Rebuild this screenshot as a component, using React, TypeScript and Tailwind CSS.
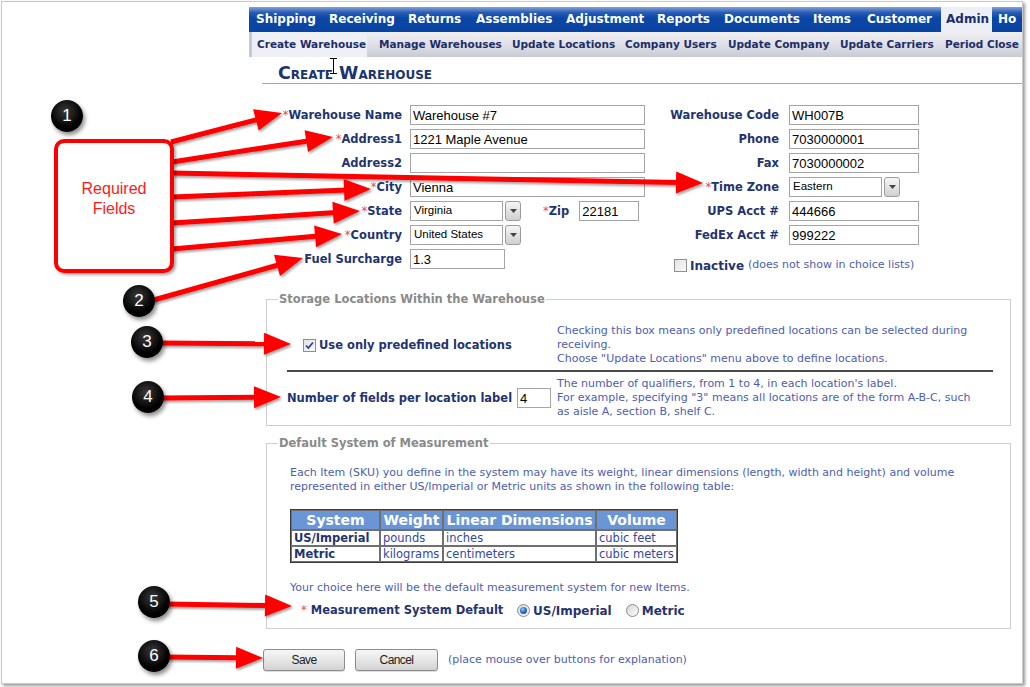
import React from "react";

const TOP_TABS: { label: string; cls: string; active?: boolean }[] = [
  { label: "Shipping", cls: "w-[72px] pl-[7px]" },
  { label: "Receiving", cls: "w-[79px] pl-[8px]" },
  { label: "Returns", cls: "w-[68px] pl-[8px]" },
  { label: "Assemblies", cls: "w-[90px] pl-[8px]" },
  { label: "Adjustment", cls: "w-[91px] pl-[8px]" },
  { label: "Reports", cls: "w-[67px] pl-[8px]" },
  { label: "Documents", cls: "w-[89px] pl-[8px]" },
  { label: "Items", cls: "w-[54px] pl-[8px]" },
  { label: "Customer", cls: "w-[82px] pl-[8px]" },
  { label: "Admin", cls: "w-[51px] pl-[5px]", active: true },
  { label: "Ho", cls: "w-[29px] pl-[6px]" },
];

const SUB_TABS: { label: string; cls: string }[] = [
  { label: "Manage Warehouses", cls: "w-[133px]" },
  { label: "Update Locations", cls: "w-[113px]" },
  { label: "Company Users", cls: "w-[103px]" },
  { label: "Update Company", cls: "w-[112px]" },
  { label: "Update Carriers", cls: "w-[105px]" },
  { label: "Period Close", cls: "w-[76px]" },
];

// start x, start y, tip x, tip y  (image coordinates)
const ARROWS: [number, number, number, number][] = [
  [171, 142, 282, 113],
  [172, 162, 333, 137],
  [172, 173, 703, 183],
  [172, 197, 371, 189],
  [172, 223, 360, 211],
  [172, 249, 342, 234],
  [150, 301, 303, 258],
  [160, 343, 291, 344],
  [160, 398, 281, 397],
  [166, 604, 292, 606],
  [166, 657, 263, 658],
];

const BADGES: { n: string; cls: string }[] = [
  { n: "1", cls: "left-[51px] top-[100px]" },
  { n: "2", cls: "left-[123px] top-[285px]" },
  { n: "3", cls: "left-[131px] top-[326px]" },
  { n: "4", cls: "left-[132px] top-[381px]" },
  { n: "5", cls: "left-[138px] top-[586px]" },
  { n: "6", cls: "left-[138px] top-[640px]" },
];

const label = "font-bold text-[11.5px] text-[#1f3470] whitespace-nowrap";
const note = "text-[11px] leading-[14px] text-[#4d5db3] whitespace-nowrap";
const arial = "font-['Liberation_Sans',Arial,sans-serif]";

export default function App() {
  return (
    <div className="relative h-[687px] w-[1030px] overflow-hidden bg-white font-['DejaVu_Sans',Verdana,sans-serif]">
      <div className="ml-px mt-px flex h-[683px] w-[1022px] border border-[#c8c8c8] bg-white shadow-[2px_2px_3px_rgba(0,0,0,0.4)]">
        <div className="w-[247px] shrink-0" />
        <div className="flex min-w-0 flex-1 flex-col overflow-hidden">
          {/* Top menu */}
          <div className="mt-[5px] flex h-[25px] shrink-0 bg-[linear-gradient(to_bottom,#86a3dc_0%,#2a5db5_22%,#0a46a6_45%,#0a44a2_100%)]">
            {TOP_TABS.map((t) => (
              <div
                key={t.label}
                className={`${t.cls} shrink-0 whitespace-nowrap text-[12px] font-bold leading-[25px] ${
                  t.active ? "bg-[#eceff6] text-[#1d2d6b]" : "text-white"
                }`}
              >
                {t.label}
              </div>
            ))}
          </div>

          {/* Sub menu */}
          <div className="flex h-[25px] shrink-0 bg-[linear-gradient(to_bottom,#efeff3_0%,#dedfe6_55%,#c8cad3_100%)] text-[10.5px] font-bold leading-[25px] text-[#1c2d69]">
            <div className="w-[3px] shrink-0 bg-[#c5c7d1]" />
            <div className="w-[115px] shrink-0 whitespace-nowrap bg-[#eef0f6] pl-[5px]">Create Warehouse</div>
            <div className="flex pl-[12px]">
              {SUB_TABS.map((t) => (
                <div key={t.label} className={`${t.cls} shrink-0 whitespace-nowrap`}>
                  {t.label}
                </div>
              ))}
            </div>
          </div>

          {/* Title */}
          <div className="ml-[13px] h-[27px] shrink-0 border-b border-[#a8a8a8] pl-[16px] pt-[7px]">
            <h1 className="text-[17.5px] font-bold leading-[18px] text-[#1b3470] [font-variant:small-caps]">
              Create Warehouse
            </h1>
          </div>

          {/* Main form */}
          <div className="mt-[19px] flex shrink-0">
            <div className="w-[396px] shrink-0">
              <LeftRow text="Warehouse Name" req>
                <TextBox w="w-[235px]" value="Warehouse #7" />
              </LeftRow>
              <LeftRow text="Address1" req>
                <TextBox w="w-[235px]" value="1221 Maple Avenue" />
              </LeftRow>
              <LeftRow text="Address2">
                <TextBox w="w-[235px]" value="" />
              </LeftRow>
              <LeftRow text="City" req>
                <TextBox w="w-[235px]" value="Vienna" />
              </LeftRow>
              <LeftRow text="State" req>
                <div className="flex items-center">
                  <Select value="Virginia" />
                  <span className={`ml-[22px] pt-[2px] ${label}`}>
                    <Req />
                    Zip
                  </span>
                  <div className="ml-[10px]">
                    <TextBox w="w-[60px]" value="22181" />
                  </div>
                </div>
              </LeftRow>
              <LeftRow text="Country" req>
                <Select value="United States" />
              </LeftRow>
              <LeftRow text="Fuel Surcharge">
                <TextBox w="w-[95px]" value="1.3" />
              </LeftRow>
            </div>
            <div className="w-[290px] shrink-0">
              <RightRow text="Warehouse Code">
                <TextBox w="w-[130px]" value="WH007B" />
              </RightRow>
              <RightRow text="Phone">
                <TextBox w="w-[130px]" value="7030000001" />
              </RightRow>
              <RightRow text="Fax">
                <TextBox w="w-[130px]" value="7030000002" />
              </RightRow>
              <RightRow text="Time Zone" req>
                <Select value="Eastern" />
              </RightRow>
              <RightRow text="UPS Acct #">
                <TextBox w="w-[130px]" value="444666" />
              </RightRow>
              <RightRow text="FedEx Acct #">
                <TextBox w="w-[130px]" value="999222" />
              </RightRow>
              <div className="mt-[8px] flex h-[20px] items-center pl-[29px]">
                <CheckBox />
                <span className="ml-[3px] whitespace-nowrap pt-[1px] text-[12px] font-bold text-[#1f3470]">Inactive</span>
                <span className="ml-[4px] whitespace-nowrap pt-[1px] text-[11px] text-[#4d5db3]">
                  (does not show in choice lists)
                </span>
              </div>
            </div>
          </div>

          {/* Storage locations */}
          <fieldset className="ml-[17px] mt-[17px] w-[745px] shrink-0 border border-[#cfcfcf]">
            <legend className="ml-[11px] px-[1px] text-[11.5px] font-bold leading-[14px] text-[#8a8a8a]">
              Storage Locations Within the Warehouse
            </legend>
            <div className="pb-[6px] pl-[20px] pr-[17px] pt-[18px]">
              <div className="flex items-center">
                <div className="flex w-[270px] shrink-0 items-center pl-[16px]">
                  <CheckBox checked />
                  <span className={`ml-[3px] pt-[2px] ${label}`}>Use only predefined locations</span>
                </div>
                <div className={note}>
                  Checking this box means only predefined locations can be selected during
                  <br />
                  receiving.
                  <br />
                  Choose "Update Locations" menu above to define locations.
                </div>
              </div>
              <div className="mt-[4px] h-[2px] bg-[#4a4a4a]" />
              <div className="mt-[5px] flex items-center">
                <div className="flex w-[270px] shrink-0 items-center">
                  <span className={`pt-[2px] ${label}`}>Number of fields per location label</span>
                  <div className="ml-auto mr-[6px]">
                    <TextBox w="w-[34px]" value="4" />
                  </div>
                </div>
                <div className={note}>
                  The number of qualifiers, from 1 to 4, in each location's label.
                  <br />
                  For example, specifying "3" means all locations are of the form A-B-C, such
                  <br />
                  as aisle A, section B, shelf C.
                </div>
              </div>
            </div>
          </fieldset>

          {/* Measurement */}
          <fieldset className="ml-[17px] mt-[10px] w-[745px] shrink-0 border border-[#cfcfcf]">
            <legend className="ml-[11px] px-[1px] text-[11.5px] font-bold leading-[14px] text-[#8a8a8a]">
              Default System of Measurement
            </legend>
            <div className="pb-[8px] pl-[23px] pt-[16px]">
              <p className={note}>
                Each Item (SKU) you define in the system may have its weight, linear dimensions (length, width and
                height) and volume
                <br />
                represented in either US/Imperial or Metric units as shown in the following table:
              </p>
              <UnitsTable />
              <p className={`mt-[18px] ${note}`}>
                Your choice here will be the default measurement system for new Items.
              </p>
              <div className="mt-[5px] flex h-[20px] items-center pl-[11px]">
                <div className={`w-[216px] shrink-0 pt-[2px] ${label}`}>
                  <span className="font-normal text-[#ee4b3b]">*</span>
                  <span className="ml-[4px]">Measurement System Default</span>
                </div>
                <Radio checked />
                <span className={`ml-[3px] pt-[2px] text-[12px] ${label}`}>US/Imperial</span>
                <div className="ml-[14px]">
                  <Radio />
                </div>
                <span className={`ml-[3px] pt-[2px] text-[12px] ${label}`}>Metric</span>
              </div>
            </div>
          </fieldset>

          {/* Buttons */}
          <div className="ml-[14px] mt-[20px] flex shrink-0 items-center">
            <Button text="Save" w="w-[82px]" />
            <div className="ml-[10px]">
              <Button text="Cancel" w="w-[83px]" />
            </div>
            <span className="ml-[10px] whitespace-nowrap text-[11px] text-[#4d5db3]">
              (place mouse over buttons for explanation)
            </span>
          </div>
        </div>
      </div>
      <Annotations />
    </div>
  );
}

function Req() {
  return <span className="font-normal text-[#ee4b3b]">*</span>;
}

function LeftRow({ text, req, children }: { text: string; req?: boolean; children: React.ReactNode }) {
  return (
    <div className="flex h-[24px] items-center">
      <div className={`w-[153px] shrink-0 pt-[2px] text-right ${label}`}>
        {req && <Req />}
        {text}
      </div>
      <div className="ml-[8px]">{children}</div>
    </div>
  );
}

function RightRow({ text, req, children }: { text: string; req?: boolean; children: React.ReactNode }) {
  return (
    <div className="flex h-[24px] items-center">
      <div className={`w-[134px] shrink-0 pt-[2px] text-right ${label}`}>
        {req && <Req />}
        {text}
      </div>
      <div className="ml-[10px]">{children}</div>
    </div>
  );
}

function TextBox({ w, value }: { w: string; value: string }) {
  return (
    <input
      readOnly
      defaultValue={value}
      className={`${w} block h-[20px] border border-[#a5a5a5] bg-white px-[2px] text-[13px] text-black outline-none ${arial}`}
    />
  );
}

function Select({ value }: { value: string }) {
  return (
    <div className="flex items-center">
      <div
        className={`flex h-[20px] w-[93px] items-center border border-[#a5a5a5] bg-white px-[3px] text-[11.5px] text-black ${arial}`}
      >
        {value}
      </div>
      <div className="ml-[2px] flex h-[20px] w-[16px] items-center justify-center rounded-[3px] border border-[#9c9c9c] bg-[linear-gradient(to_bottom,#f6f6f6,#d0d0d0)]">
        <svg width="7" height="4" viewBox="0 0 7 4">
          <path d="M0 0h7L3.5 4z" fill="#444" />
        </svg>
      </div>
    </div>
  );
}

function CheckBox({ checked }: { checked?: boolean }) {
  return (
    <span className="flex h-[13px] w-[13px] shrink-0 items-center justify-center border border-[#8f8f8f] bg-[linear-gradient(135deg,#e4e4e4,#f8f8f8)]">
      {checked && (
        <svg width="11" height="11" viewBox="0 0 11 11">
          <path d="M2 5.5 L4.3 8 L9 2.5" fill="none" stroke="#2b3f91" strokeWidth="1.8" />
        </svg>
      )}
    </span>
  );
}

function Radio({ checked }: { checked?: boolean }) {
  return (
    <span className="flex h-[13px] w-[13px] shrink-0 items-center justify-center rounded-full border border-[#8a8a8a] bg-[linear-gradient(135deg,#d8d8d8,#fbfbfb)]">
      {checked && (
        <span className="h-[7px] w-[7px] rounded-full bg-[radial-gradient(circle_at_40%_35%,#8ccaf5,#1f63c8_55%,#0b3d8f)]" />
      )}
    </span>
  );
}

function Button({ text, w }: { text: string; w: string }) {
  return (
    <div
      className={`${w} flex h-[22px] items-center justify-center rounded-[3px] border border-[#8c8c8c] bg-[linear-gradient(to_bottom,#f7f7f7_0%,#e6e6e6_50%,#d2d2d2_100%)] text-[12px] tracking-[-0.6px] text-[#222] shadow-[0_1px_1px_rgba(0,0,0,0.15)] ${arial}`}
    >
      {text}
    </div>
  );
}

function UnitsTable() {
  const rows = [
    ["US/Imperial", "pounds", "inches", "cubic feet"],
    ["Metric", "kilograms", "centimeters", "cubic meters"],
  ];
  const th = "border border-[#6f6f6f] bg-[#6a96d8] p-0 text-center text-[14px] font-bold leading-[18px] text-white whitespace-nowrap";
  const td = "border border-[#6f6f6f] p-0 pl-[2px] text-left text-[11.5px] leading-[14px] whitespace-nowrap";
  return (
    <table className="mt-[15px] border-separate border-spacing-0 border border-[#3a3a3a]">
      <thead>
        <tr>
          <th className={`w-[89px] ${th}`}>System</th>
          <th className={`w-[63px] ${th}`}>Weight</th>
          <th className={`w-[153px] ${th}`}>Linear Dimensions</th>
          <th className={`w-[81px] ${th}`}>Volume</th>
        </tr>
      </thead>
      <tbody>
        {rows.map((r) => (
          <tr key={r[0]}>
            <td className={`${td} font-bold text-[#1f3470]`}>{r[0]}</td>
            <td className={`${td} text-[#3447a0]`}>{r[1]}</td>
            <td className={`${td} text-[#3447a0]`}>{r[2]}</td>
            <td className={`${td} text-[#3447a0]`}>{r[3]}</td>
          </tr>
        ))}
      </tbody>
    </table>
  );
}

function Arrow({ a }: { a: [number, number, number, number] }) {
  const [x1, y1, x2, y2] = a;
  const dx = x2 - x1;
  const dy = y2 - y1;
  const len = Math.hypot(dx, dy);
  const ux = dx / len;
  const uy = dy / len;
  const hl = 27;
  const hw = 11;
  const bx = x2 - ux * hl;
  const by = y2 - uy * hl;
  const px = -uy;
  const py = ux;
  const pts = `${x2},${y2} ${bx + px * hw},${by + py * hw} ${bx - px * hw},${by - py * hw}`;
  return (
    <g>
      <line x1={x1} y1={y1} x2={bx + ux * 3} y2={by + uy * 3} stroke="#ff0000" strokeWidth={5} />
      <polygon points={pts} fill="#ff0000" />
    </g>
  );
}

function Annotations() {
  return (
    <div className="pointer-events-none absolute inset-0">
      <svg className="absolute left-0 top-0" width={1030} height={687}>
        <defs>
          <filter id="ds" filterUnits="userSpaceOnUse" x="0" y="0" width="1030" height="687">
            <feDropShadow dx="1.5" dy="2" stdDeviation="1.3" floodColor="#000" floodOpacity="0.35" />
          </filter>
        </defs>
        <g filter="url(#ds)">
          {ARROWS.map((a, i) => (
            <Arrow key={i} a={a} />
          ))}
        </g>
        {/* text cursor */}
        <g fill="none" strokeLinecap="square">
          <path d="M330.5 58.5h2.5M336.5 58.5h-2.5M333.5 59v14M330.5 73.5h2.5M336.5 73.5h-2.5" stroke="#fff" strokeWidth="3" />
          <path d="M330.5 58.5h2.5M336.5 58.5h-2.5M333.5 59v14M330.5 73.5h2.5M336.5 73.5h-2.5" stroke="#000" strokeWidth="1" />
        </g>
      </svg>

      <div className="absolute left-[54px] top-[139px] h-[134px] w-[120px] rounded-[10px] border-[4px] border-[#ff0000] bg-white pt-[36px] text-center text-[16px] leading-[20px] text-[#ff1a1a] shadow-[2px_2px_3px_rgba(0,0,0,0.35)] font-['Liberation_Sans',Arial,sans-serif]">
        Required
        <br />
        Fields
      </div>

      {BADGES.map((b) => (
        <div
          key={b.n}
          className={`absolute ${b.cls} flex h-[32px] w-[32px] items-center justify-center rounded-full bg-[radial-gradient(circle_at_45%_35%,#3a3a3a,#000_60%)] text-[17px] text-white shadow-[2px_3px_4px_rgba(0,0,0,0.45)] font-['Liberation_Sans',Arial,sans-serif]`}
        >
          {b.n}
        </div>
      ))}
    </div>
  );
}
